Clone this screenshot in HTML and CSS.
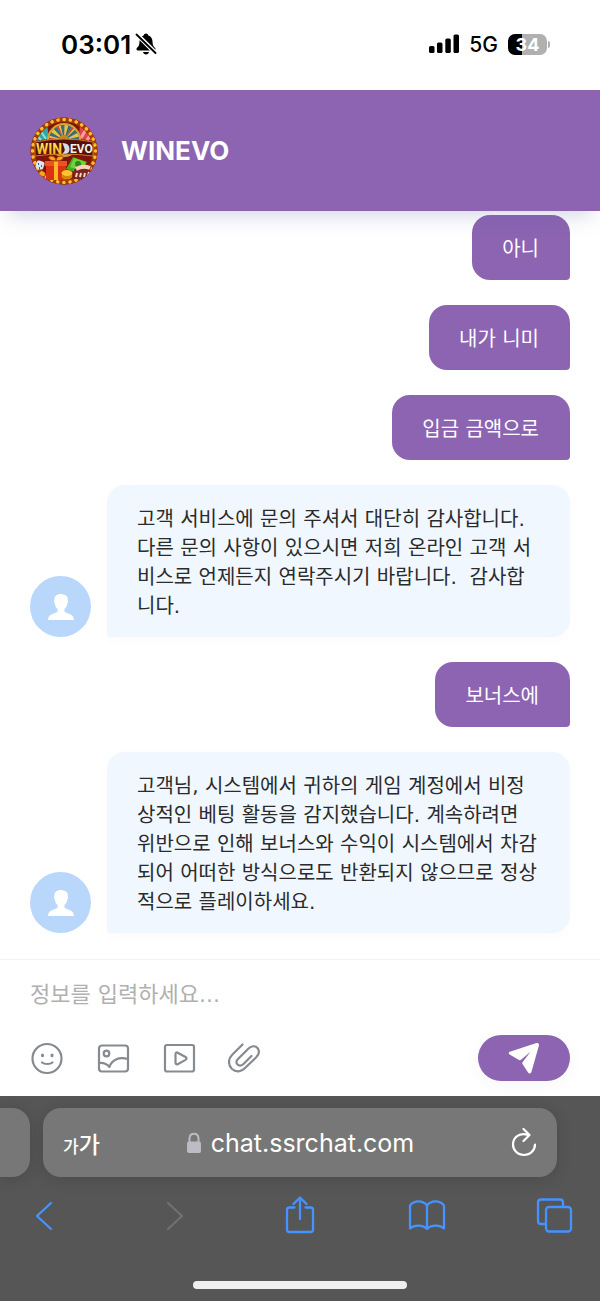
FILE: index.html
```html
<!DOCTYPE html>
<html lang="ko">

<head>
    <meta charset="UTF-8">
    <meta name="viewport" content="width=device-width, initial-scale=1.0">
    <title>WINEVO</title>
    <link rel="stylesheet" href="styles.css">
</head>

<body>
    <!-- status bar -->
    <div class="status">
        <div class="status-left">
            <span class="time">03:01</span>
            <svg width="22" height="22" viewBox="0 0 22 22">
                <path d="M11 0.5c1.3 0 2 .8 2.1 1.8 3 .9 4.3 3.400 4.400 6.200 0 3.500 .9 4.800 2.600 6.600 .9 1 .5 2.400-1 2.400H2.900c-1.500 0-1.900-1.400-1-2.400C3.600 13.300 4.500 12 4.500 8.500c.1-2.800 1.400-5.300 4.400-6.200C9 1.300 9.700.5 11 .5z" />
                <path d="M8 19h6c-.3 1.600-1.400 2.500-3 2.500S8.300 20.600 8 19z" />
                <path d="M2 1.500l19 19" stroke="#fff" stroke-width="4.500" />
                <path d="M1.500 1.500l19 18.500" stroke="#000" stroke-width="1.800" stroke-linecap="round" />
            </svg>
        </div>
        <div class="status-right">
            <svg width="30" height="20" viewBox="0 0 30 20">
                <rect x="0" y="12" width="5.500" height="7" rx="1.500" />
                <rect x="8" y="8.500" width="5.500" height="10.500" rx="1.500" />
                <rect x="16.300" y="4.500" width="5.500" height="14.500" rx="1.500" />
                <rect x="24.500" y="0.500" width="5.500" height="18.500" rx="1.500" />
            </svg>
            <span class="network">5G</span>
            <div class="battery"><span>34</span></div>
        </div>
    </div>

    <header class="header">
        <svg class="logo" width="68" height="68" viewBox="0 0 68 68">
            <defs>
                <clipPath id="round"><circle cx="34" cy="34" r="33.500" /></clipPath>
                <linearGradient id="gold" x1="0" y1="0" x2="0" y2="1">
                    <stop offset="0" stop-color="#fff36a" />
                    <stop offset="1" stop-color="#f5a400" />
                </linearGradient>
            </defs>
            <g clip-path="url(#round)">
                <rect width="68" height="68" fill="#7d1608" />
                <!-- curtains -->
                <path d="M4 24V10L17 6l2 16z" fill="#2fa9a8" />
                <path d="M8 10l8 12M5 16l6 7" stroke="#8fe0da" stroke-width="2" />
                <path d="M64 24V10L50 6l-1 16z" fill="#dc4450" />
                <path d="M58 9l-7 12M63 15l-6 8" stroke="#ff9f9b" stroke-width="3" />
                <!-- bulbs frame -->
                <circle cx="34" cy="34" r="31.500" fill="none" stroke="#a53a06" stroke-width="5" />
                <circle cx="34" cy="34" r="31.500" fill="none" stroke="#ffc02e" stroke-width="3.500" stroke-dasharray="0.100 6.080" stroke-linecap="round" />
                <!-- wheel -->
                <circle cx="34" cy="23" r="17" fill="#d9a13a" />
                <circle cx="34" cy="23" r="15" fill="#356f78" />
                <circle cx="34" cy="23" r="10" fill="none" stroke="#e8c04c" stroke-width="10" stroke-dasharray="2.600 2.640" />
                <circle cx="34" cy="23" r="10" fill="none" stroke="#d64028" stroke-width="10" stroke-dasharray="1.300 9.180" />
                <circle cx="34" cy="23" r="5" fill="#c8862a" />
                <path d="M5 25q29-6 58 0v14q-29-4-58 0z" fill="#541008" stroke="#d6781c" />
                <!-- prizes -->
                <rect x="16" y="47" width="20" height="16" rx="1" fill="#d93412" />
                <path d="M15 44h22v5H15z" fill="#ee5220" />
                <path d="M24 44h4v19h-4z" fill="#ffb727" />
                <path d="M26 44c-8 0-9-5-5-5 3 0 5 2 5 5 0-3 2-5 5-5 4 0 3 5-5 5z" fill="#f7a51d" stroke="#a53a06" />
                <path d="M43 40l14 5-6 12-15-5z" fill="#45ad25" />
                <path d="M44 41l12 4-4 9-12-4z" fill="#72d13c" />
                <circle cx="48" cy="47" r="3" fill="#2d861b" />
                <rect x="6" y="44" width="8" height="8" rx="2" fill="#dbe6f5" transform="rotate(18 10 48)" />
                <path d="M8 47h1M11 49h1M9 51h1" stroke="#3768a8" stroke-width="2" />
                <path d="M44 53l4-4h13l-2 13H44z" fill="#7b2620" />
                <path d="M46 52q7-4 14-1" stroke="#ffd0bd" stroke-width="4" fill="none" />
                <path d="M46 60l1-4M50 60l1-4M54 60l1-4M58 59l1-4" stroke="#f3d3c5" stroke-width="2" />
                <ellipse cx="37" cy="59" rx="5.500" ry="3.500" fill="#d98506" />
                <ellipse cx="37" cy="56" rx="5.500" ry="3" fill="#ffc431" />
                <ellipse cx="12" cy="57" rx="3" ry="2.500" fill="#f5a81b" />
                <path d="M32.500 26q7 0 7 6t-7 4.500q3-2.500 2-5t-2-5.500z" fill="#d9dde2" />
                <text x="6" y="37" class="logo-gold">WIN</text>
                <text x="40" y="36" class="logo-silver">EVO</text>
            </g>
        </svg>
        <h1>WINEVO</h1>
    </header>

    <main class="messages">
        <div class="message mine"><p>아니</p></div>
        <div class="message mine"><p>내가 니미</p></div>
        <div class="message mine"><p>입금 금액으로</p></div>
        <div class="message">
            <div class="avatar">
                <svg width="28" height="28" viewBox="0 0 28 28">
                    <path d="M7.500 6c0-3 2-4.500 4-4.500 1-.8 4-.3 5.500.2 3 .3 4 2.300 3.800 5.300.4 1 .4 3-.5 3.800-.4 2.400-1.600 4.200-2.800 5.200v2.500c.6 2.300 9.500 1.300 9.500 8.500H1c0-7.200 8.900-6.200 9.500-8.500V16c-1.200-1-2.200-2.800-2.600-5.200C6.900 10 6.900 8 7.500 6z" />
                </svg>
            </div>
            <p>고객 서비스에 문의 주셔서 대단히 감사합니다. 다른 문의 사항이 있으시면 저희 온라인 고객 서비스로 언제든지 연락주시기 바랍니다.&nbsp; 감사합니다.</p>
        </div>
        <div class="message mine"><p>보너스에</p></div>
        <div class="message">
            <div class="avatar">
                <svg width="28" height="28" viewBox="0 0 28 28">
                    <path d="M7.500 6c0-3 2-4.500 4-4.500 1-.8 4-.3 5.500.2 3 .3 4 2.300 3.800 5.300.4 1 .4 3-.5 3.800-.4 2.400-1.600 4.200-2.800 5.200v2.500c.6 2.300 9.500 1.300 9.500 8.500H1c0-7.200 8.900-6.200 9.500-8.500V16c-1.200-1-2.200-2.800-2.600-5.200C6.900 10 6.900 8 7.500 6z" />
                </svg>
            </div>
            <p>고객님, 시스템에서 귀하의 게임 계정에서 비정상적인 베팅 활동을 감지했습니다. 계속하려면 위반으로 인해 보너스와 수익이 시스템에서 차감되어 어떠한 방식으로도 반환되지 않으므로 정상적으로 플레이하세요.</p>
        </div>
    </main>

    <form class="composer">
        <input type="text" placeholder="정보를 입력하세요..." aria-label="정보를 입력하세요">
        <div class="actions">
            <button type="button" class="tool" aria-label="이모티콘">
                <svg width="34" height="34" viewBox="0 0 34 34">
                    <circle cx="17" cy="17.500" r="14.500" />
                    <path d="M12 21.500c2.500 2 8 2 10.500 0" />
                    <path d="M12.500 14v.8M22 14v.8" stroke-width="3" />
                </svg>
            </button>
            <button type="button" class="tool" aria-label="사진">
                <svg width="34" height="34" viewBox="0 0 34 34">
                    <rect x="3" y="4.500" width="29" height="26" rx="3" />
                    <circle cx="10.500" cy="12.500" r="2.800" />
                    <path d="M3 22c4-.5 8 1 10.500 4 2-7 9-10.500 18.500-8" />
                </svg>
            </button>
            <button type="button" class="tool" aria-label="동영상">
                <svg width="34" height="34" viewBox="0 0 34 34">
                    <rect x="3" y="4" width="29" height="26.500" rx="2" />
                    <path d="M13.500 13.500c0-1.800 1-2.500 2.200-1.800l7.800 4.300c1.400.9 1.400 2 0 2.900l-7.800 4.300c-1.200.6-2.200 0-2.200-1.800z" />
                </svg>
            </button>
            <button type="button" class="tool" aria-label="파일 첨부">
                <svg width="34" height="34" viewBox="0 0 34 34">
                    <path d="M14.500 3.500L4 14C0 18 0 24 4 28c4 3.500 9.500 3 13-1L28 16.500c4-4 3.500-7 1.500-9.500s-6.500-2.500-9.500 1L10 18c-2 2-2 4-.5 5.500s4 1.500 6-.5l8-8" />
                </svg>
            </button>
            <button type="submit" class="send" aria-label="보내기">
                <svg width="32" height="32" viewBox="0 0 32 32">
                    <path d="M1.800 9.700L28.500 1c1.600-.5 2.800.6 2.500 2.200l-7.500 26.600c-.6 2-2.500 2-3.500.6l-5.500-8.300c-.5-.8-.3-1.300.2-2L22.500 9.700 13 17.800c-.6.5-1.200.5-2 .1L1.600 12.500C.4 11.600.4 10.200 1.800 9.700z" />
                </svg>
            </button>
        </div>
    </form>

    <!-- browser toolbar -->
    <footer class="browser">
        <div class="tabs">
            <div class="prev-tab"></div>
            <div class="address">
                <button type="button" class="text-size" aria-label="글자 크기"><small>가</small>가</button>
                <a href="#" class="host">
                    <svg width="16" height="22" viewBox="0 0 16 22">
                        <path d="M3.500 10V6.500c0-6.500 9-6.500 9 0V10" fill="none" stroke="#bdbbc3" stroke-width="2" />
                        <rect x="1" y="9.500" width="14" height="11.500" rx="2" fill="#bdbbc3" />
                    </svg>
                    chat.ssrchat.com
                </a>
                <button type="button" class="reload" aria-label="새로 고침">
                    <svg width="26" height="30" viewBox="0 0 26 30">
                        <path d="M17 7C9 4 2 9 2 16.500c0 6 5 10.500 11 10.500s11-4.500 11-10.500M12.500 1l6 6-6 6" />
                    </svg>
                </button>
            </div>
        </div>
        <nav class="nav">
            <button type="button" aria-label="뒤로">
                <svg width="40" height="40" viewBox="0 0 40 40"><path d="M27 7L13 20l14 13" /></svg>
            </button>
            <button type="button" aria-label="앞으로" disabled>
                <svg width="40" height="40" viewBox="0 0 40 40"><path d="M16 7l14 13-14 13" /></svg>
            </button>
            <button type="button" aria-label="공유">
                <svg width="40" height="40" viewBox="0 0 40 40"><path d="M15.500 11.500h-5c-1.500 0-2.500 1-2.500 2.500v19.500c0 1.500 1 2.500 2.500 2.500h21c1.500 0 2.500-1 2.500-2.500V14c0-1.500-1-2.500-2.500-2.500h-5M21 23V2M14.500 8L21 1.500 27.500 8" /></svg>
            </button>
            <button type="button" aria-label="책갈피">
                <svg width="40" height="40" viewBox="0 0 40 40"><path d="M20 9.500c-4-5.500-13-5.500-17 0v23c4-4 13-4 17 0.500 4-4.500 13-4.500 17-.5v-23c-4-5.500-13-5.500-17 0zM20 9.500V33" /></svg>
            </button>
            <button type="button" aria-label="탭">
                <svg width="40" height="40" viewBox="0 0 40 40">
                    <path d="M11 28H7c-1.800 0-3-1.200-3-3V6.500c0-1.800 1.200-3 3-3h19c1.800 0 3 1.200 3 3V11" />
                    <rect x="12" y="11" width="25" height="24.500" rx="3" />
                </svg>
            </button>
        </nav>
        <div class="home-bar"></div>
    </footer>
</body>

</html>
```
FILE: styles.css
```css
* {
    box-sizing: border-box;
}

body {
    margin: 0;
    min-height: 100vh;
    display: flex;
    flex-direction: column;
    background-color: #fff;
    color: #2b2b2b;
    font-family: Inter, "Noto Sans CJK KR", sans-serif;
}

button,
input {
    font-family: inherit;
    border: none;
    background: none;
    padding: 0;
}

button {
    cursor: pointer;
}

svg {
    display: block;
    flex-shrink: 0;
}

/* status bar */
.status {
    height: 90px;
    padding: 0 53px 2px 61px;
    display: flex;
    align-items: center;
    justify-content: space-between;
    color: #000;
}

.status-left,
.status-right {
    display: flex;
    align-items: center;
    gap: 4px;
}

.status-right {
    gap: 10px;
}

.time {
    font-size: 26px;
    font-weight: 600;
}

.network {
    font-size: 21px;
    font-weight: 500;
}

.battery {
    position: relative;
    width: 39px;
    height: 21px;
    border-radius: 7px;
    background: linear-gradient(to right, #000 35%, #b0b0b0 35%);
    color: #fff;
    font-size: 18px;
    font-weight: 700;
    line-height: 21px;
    text-align: center;
}

.battery::after {
    content: "";
    position: absolute;
    top: 7px;
    right: -3px;
    width: 2px;
    height: 7px;
    border-radius: 0 2px 2px 0;
    background-color: #b0b0b0;
}

/* header */
.header {
    position: relative;
    z-index: 1;
    height: 121px;
    padding: 0 30px;
    display: flex;
    align-items: center;
    gap: 23px;
    background-color: #8c64b2;
    box-shadow: 0 12px 20px -8px rgba(70, 90, 150, 0.25);
}

.header h1 {
    margin: 0;
    color: #fff;
    font-size: 26px;
    font-weight: 700;
}

.logo-gold,
.logo-silver {
    font-family: Roboto, sans-serif;
    font-weight: 700;
}

.logo-gold {
    font-size: 14px;
    fill: url(#gold);
}

.logo-silver {
    font-size: 12px;
    fill: #f1f1f1;
}

/* messages */
.messages {
    flex: 1;
    padding: 4px 30px 25px;
    display: flex;
    flex-direction: column;
    gap: 25px;
}

.message {
    display: flex;
    align-items: flex-end;
    gap: 16px;
}

.message p {
    flex: 1;
    margin: 0;
    padding: 20px 31px 16px 30px;
    border-radius: 18px 18px 18px 4px;
    background-color: #f0f7ff;
    box-shadow: 0 4px 16px rgba(0, 0, 0, 0.02);
    font-family: "DejaVu Sans", "Noto Sans CJK KR", sans-serif;
    font-size: 20px;
    line-height: 29px;
    word-break: break-all;
}

.message.mine {
    justify-content: flex-end;
}

.message.mine p {
    flex: none;
    border-radius: 18px 18px 4px 18px;
    background-color: #8c64b2;
    box-shadow: none;
    color: #fff;
}

.avatar {
    width: 61px;
    height: 61px;
    border-radius: 50%;
    background-color: #b9d6fb;
    fill: #fff;
    display: flex;
    align-items: center;
    justify-content: center;
}

/* composer */
.composer {
    padding: 18px 30px 15px;
    border-top: 1px solid #edf4fa;
}

.composer input {
    display: block;
    width: 100%;
    height: 32px;
    margin-bottom: 25px;
    font-family: "DejaVu Sans", "Noto Sans CJK KR", sans-serif;
    font-size: 22px;
    outline: none;
}

.composer input::placeholder {
    color: #b0b0b0;
}

.actions {
    display: flex;
    align-items: center;
    gap: 32px;
}

.tool {
    fill: none;
    stroke: #868a91;
    stroke-width: 2.2;
    stroke-linecap: round;
    stroke-linejoin: round;
}

.send {
    margin-left: auto;
    width: 92px;
    height: 46px;
    border-radius: 23px;
    background-color: #8c64b2;
    box-shadow: 0 4px 16px rgba(0, 0, 0, 0.04);
    fill: #fff;
    display: flex;
    align-items: center;
    justify-content: center;
}

/* browser toolbar */
.browser {
    padding: 12px 0;
    background-color: #565656;
}

.tabs {
    display: flex;
    gap: 13px;
    padding-right: 43px;
    margin-bottom: 19px;
}

.prev-tab {
    width: 30px;
    border-radius: 0 18px 18px 0;
    background-color: #777;
    box-shadow: 0 2px 16px rgba(0, 0, 0, 0.14);
}

.address {
    flex: 1;
    height: 69px;
    padding: 0 20px;
    display: flex;
    align-items: center;
    border-radius: 18px;
    background-color: #777;
    box-shadow: 0 2px 16px rgba(0, 0, 0, 0.14);
}

.text-size {
    flex: 1;
    color: #fff;
    font-size: 23px;
    font-weight: 500;
    text-align: left;
}

.text-size small {
    font-size: 17px;
}

.host {
    display: flex;
    align-items: center;
    gap: 9px;
    color: #fff;
    font-size: 25px;
    text-decoration: none;
}

.reload {
    flex: 1;
    display: flex;
    justify-content: flex-end;
    fill: none;
    stroke: #fff;
    stroke-width: 2.2;
    stroke-linecap: round;
    stroke-linejoin: round;
}

.nav {
    display: flex;
    justify-content: space-between;
    padding: 0 26px 0 24px;
    margin-bottom: 45px;
}

.nav button {
    fill: none;
    stroke: #4593ff;
    stroke-width: 2.3;
    stroke-linecap: round;
    stroke-linejoin: round;
}

.nav button:disabled {
    stroke: #707070;
}

.home-bar {
    width: 214px;
    height: 8px;
    margin: 0 auto;
    border-radius: 4px;
    background-color: #efefef;
}
```
